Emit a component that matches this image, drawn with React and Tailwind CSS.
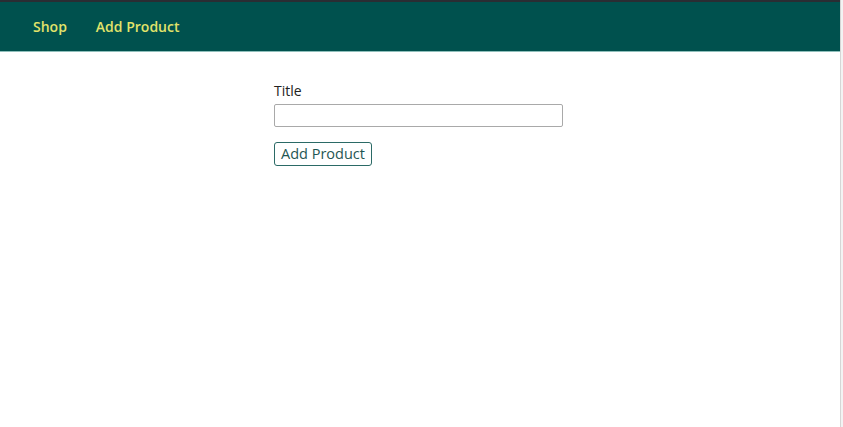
export default function App() {
  return (
    <div className="flex h-[427px] w-[843px] bg-white" style={{ fontFamily: '"Open Sans", sans-serif' }}>
      <div className="flex flex-1 flex-col">
        <header className="flex h-[52px] items-center gap-[29px] border-t-2 border-b border-t-[#2a2d33] border-b-[#8fbfbb] bg-[#00514e] pl-[33px] text-[14px] font-semibold text-[#e2e36a]">
          <a className="cursor-pointer">Shop</a>
          <a className="cursor-pointer">Add Product</a>
        </header>
        <main className="flex flex-col items-start pl-[274px] pt-[29px]">
          <label className="text-[14px] font-medium leading-[20px] text-[#222]">Title</label>
          <input type="text" className="mt-[3px] h-[23px] w-[289px] rounded-[2px] border border-[#a9a9a9] bg-white" />
          <button className="mt-[15px] h-[24px] rounded-[3px] border border-[#2b6a66] bg-white px-[6px] text-[14.5px] font-medium leading-[20px] text-[#1f5653]">
            Add Product
          </button>
        </main>
      </div>
      <div className="w-[3px] border-l border-[#d6d6d6] bg-[#f3f3f3]" />
    </div>
  );
}
